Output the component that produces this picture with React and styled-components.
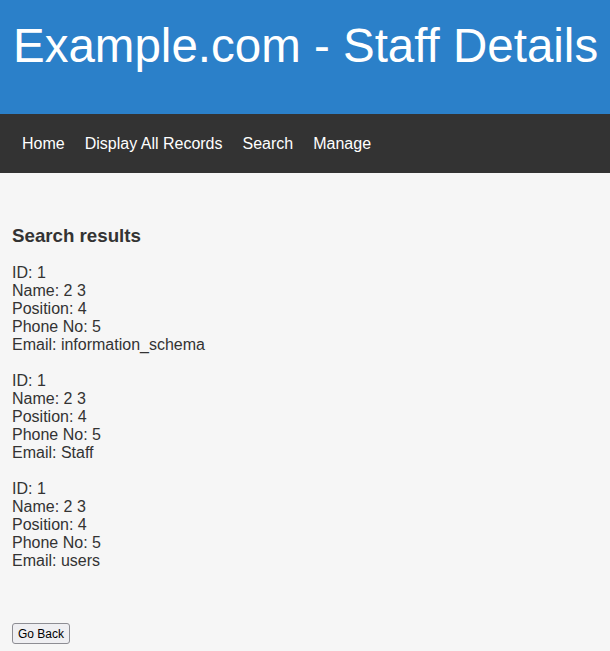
import React from "react";
import styled, { createGlobalStyle } from "styled-components";

const Global = createGlobalStyle`
  html, body { margin: 0; padding: 0; background: #f6f6f6; }
  body { font-family: "Liberation Sans", Arial, sans-serif; color: #333; }
`;

const Header = styled.header`
  background: #2b80c9;
  height: 114px;
  box-sizing: border-box;
  padding: 18px 13px 0;
`;

const Title = styled.h1`
  margin: 0;
  font-size: 47.5px;
  font-weight: normal;
  color: #fff;
  line-height: 56px;
  white-space: nowrap;
`;

const Nav = styled.nav`
  background: #333;
  height: 59px;
  display: flex;
  align-items: center;
  padding: 0 12px;
`;

const NavLink = styled.a`
  color: #fff;
  text-decoration: none;
  font-size: 16px;
  padding: 0 10px;
`;

const Main = styled.main`
  padding: 52px 12px 0;
`;

const Heading = styled.h3`
  margin: 0 0 17px;
  font-size: 18.72px;
  font-weight: bold;
  line-height: 22px;
`;

const Record = styled.div`
  font-size: 16px;
  line-height: 18px;
  margin-bottom: 18px;
`;

const Back = styled.button`
  margin-top: 35px;
  height: 21px;
  font-family: "Liberation Sans", Arial, sans-serif;
  font-size: 12px;
  padding: 0 5px;
  background: #efeff2;
  border: 1px solid #8d8d93;
  border-radius: 3px;
  color: #000;
`;

const records = [
  { id: 1, name: "2 3", position: 4, phone: 5, email: "information_schema" },
  { id: 1, name: "2 3", position: 4, phone: 5, email: "Staff" },
  { id: 1, name: "2 3", position: 4, phone: 5, email: "users" },
];

export default function App() {
  return (
    <>
      <Global />
      <Header>
        <Title>Example.com - Staff Details</Title>
      </Header>
      <Nav>
        <NavLink href="#">Home</NavLink>
        <NavLink href="#">Display All Records</NavLink>
        <NavLink href="#">Search</NavLink>
        <NavLink href="#">Manage</NavLink>
      </Nav>
      <Main>
        <Heading>Search results</Heading>
        {records.map((r, i) => (
          <Record key={i}>
            ID: {r.id}<br />
            Name: {r.name}<br />
            Position: {r.position}<br />
            Phone No: {r.phone}<br />
            Email: {r.email}
          </Record>
        ))}
        <Back>Go Back</Back>
      </Main>
    </>
  );
}
